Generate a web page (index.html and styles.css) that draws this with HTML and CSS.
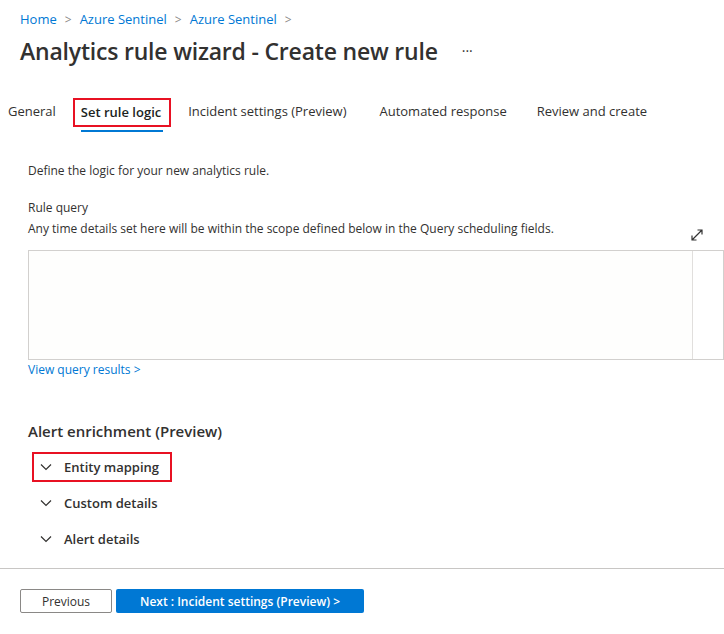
FILE: index.html
```html
<!DOCTYPE html>
<html>
<head>
<meta charset="utf-8">
<link rel="stylesheet" href="styles.css">
</head>
<body>
<div class="page">
  <nav class="crumbs">
    <a>Home</a><span class="sep">&gt;</span><a>Azure Sentinel</a><span class="sep">&gt;</span><a>Azure Sentinel</a><span class="sep">&gt;</span>
  </nav>
  <div class="titlebar">
    <h1>Analytics rule wizard - Create new rule</h1>
    <span class="more">···</span>
  </div>
  <div class="tabs">
    <div class="tab">General</div>
    <div class="tab active"><span class="hl">Set rule logic</span><span class="ul"></span></div>
    <div class="tab">Incident settings (Preview)</div>
    <div class="tab">Automated response</div>
    <div class="tab">Review and create</div>
  </div>
  <div class="content">
    <p class="intro">Define the logic for your new analytics rule.</p>
    <p class="label">Rule query</p>
    <div class="descrow">
      <p class="desc">Any time details set here will be within the scope defined below in the Query scheduling fields.</p>
      <svg class="expand" width="14" height="14" viewBox="0 0 14 14"><path d="M2 12 L12 2 M7.5 2 H12 V6.5 M2 7.5 V12 H6.5" fill="none" stroke="#333" stroke-width="1.2"/></svg>
    </div>
    <div class="editor"><div class="edbody"></div><div class="scroll"></div></div>
    <a class="link">View query results &gt;</a>
    <h2>Alert enrichment (Preview)</h2>
    <div class="acc">
      <div class="item boxed"><svg class="chev" width="12" height="8" viewBox="0 0 12 8"><path d="M1 1.5 L6 6.5 L11 1.5" fill="none" stroke="#323130" stroke-width="1.2"/></svg><span>Entity mapping</span></div>
      <div class="item"><svg class="chev" width="12" height="8" viewBox="0 0 12 8"><path d="M1 1.5 L6 6.5 L11 1.5" fill="none" stroke="#323130" stroke-width="1.2"/></svg><span>Custom details</span></div>
      <div class="item"><svg class="chev" width="12" height="8" viewBox="0 0 12 8"><path d="M1 1.5 L6 6.5 L11 1.5" fill="none" stroke="#323130" stroke-width="1.2"/></svg><span>Alert details</span></div>
    </div>
  </div>
  <footer class="footer">
    <button class="btn prev">Previous</button>
    <button class="btn next">Next : Incident settings (Preview) &gt;</button>
  </footer>
</div>
</body>
</html>
```

FILE: styles.css
```css
* { box-sizing: border-box; }
html, body { margin: 0; padding: 0; background: #fff; }
body { font-family: "Open Sans", "Noto Sans", sans-serif; color: #323130; width: 724px; height: 634px; overflow: hidden; }
.page { display: flex; flex-direction: column; }
.crumbs { display: flex; align-items: center; padding: 9px 0 0 20px; height: 29px; font-size: 13px; }
.crumbs a { color: #0078d4; }
.crumbs .sep { color: #8a8886; margin: 0 8px; font-size: 12px; }
.titlebar { display: flex; align-items: center; padding-left: 20px; height: 43px; }
.titlebar h1 { margin: 0; font-size: 23px; font-weight: 600; color: #323130; letter-spacing: -0.2px; }
.more { margin-left: 24px; font-size: 14px; color: #323130; }
.tabs { display: flex; align-items: flex-start; padding-left: 8px; margin-top: 26px; height: 35px; font-size: 13px; }
.tab { position: relative; height: 29px; line-height: 27px; margin-right: 33px; }
.tab:first-child { margin-right: 17px; }
.tab.active { margin-right: 17px; }
.tab:nth-child(4) { margin-right: 30px; }
.hl { display: block; border: 2px solid #e81123; padding: 0 8px 0 6px; font-weight: 600; line-height: 25px; color: #201f1e; }
.ul { position: absolute; left: 8px; right: 8px; top: 32px; height: 2px; background: #0078d4; }
.content { padding: 30px 0 0 28px; font-size: 12px; }
.content p { margin: 0; }
.intro { height: 37px; line-height: 16px; }
.label { line-height: 16px; height: 21px; }
.descrow { display: flex; justify-content: space-between; align-items: flex-start; padding-right: 20px; height: 29px; }
.desc { line-height: 16px; }
.expand { margin-top: 7px; }
.editor { display: flex; height: 110px; border: 1px solid #d2d0ce; background: #fefefd; }
.edbody { flex: 1; }
.scroll { width: 31px; border-left: 1px solid #e1dfdd; background: #fff; }
.link { display: block; color: #0078d4; margin-top: 2px; line-height: 16px; }
h2 { margin: 43px 0 0; font-size: 15px; font-weight: 600; line-height: 20px; color: #323130; }
.acc { display: flex; flex-direction: column; margin-top: 11px; margin-left: 4px; }
.item { display: flex; align-items: center; height: 30px; padding-left: 6px; font-size: 13px; font-weight: 600; color: #323130; margin-bottom: 6px; width: 140px; border: 2px solid transparent; }
.item.boxed { border-color: #e81123; }
.chev { margin-right: 12px; }
.footer { margin-top: 8px; border-top: 1px solid #c8c6c4; padding: 20px 0 0 20px; display: flex; gap: 4px; }
.btn { height: 24px; font-family: inherit; font-size: 12px; border-radius: 2px; }
.prev { width: 92px; border: 1px solid #8a8886; background: #fff; color: #323130; }
.next { width: 248px; border: none; background: #0078d4; color: #fff; font-weight: 600; }
```
